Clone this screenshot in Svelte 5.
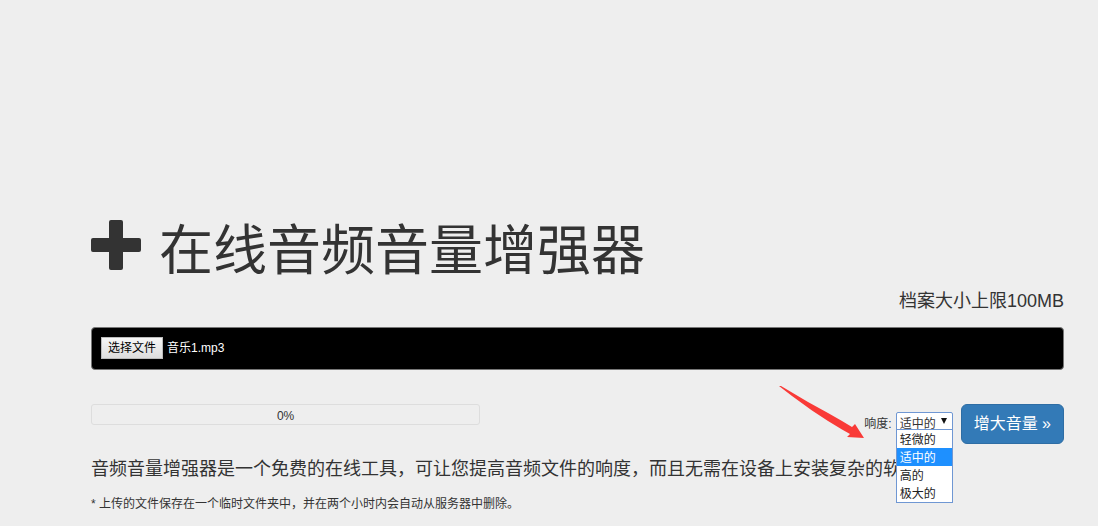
<script>
  const levels = ['轻微的', '适中的', '高的', '极大的'];
  let level = $state('适中的');
  let fileName = $state('音乐1.mp3');

  function pickFile(event) {
    const file = event.currentTarget.files[0];
    if (file) fileName = file.name;
  }
</script>

<main>
  <h1>
    <svg class="plus" viewBox="0 0 54 54" aria-hidden="true">
      <path d="M20 0h10q2 0 2 2v16h16q2 0 2 2v10q0 2-2 2h-16v16q0 2-2 2h-10q-2 0-2-2v-16h-16q-2 0-2-2v-10q0-2 2-2h16v-16q0-2 2-2z" />
    </svg>
    <span>在线音频音量增强器</span>
  </h1>

  <p class="limit">档案大小上限100MB</p>

  <div class="file">
    <input id="audio" type="file" accept="audio/*" onchange={pickFile} />
    <label for="audio">选择文件</label>
    <span>{fileName}</span>
  </div>

  <div class="controls">
    <div class="progress" role="progressbar" aria-label="0%" aria-valuenow="0" aria-valuemin="0" aria-valuemax="100">0%</div>
    <div class="actions">
      <label for="loudness">响度:</label>
      <div class="picker">
        <select id="loudness" bind:value={level}>
          {#each levels as name}
            <option value={name}>{name}</option>
          {/each}
        </select>
        <svg class="caret" viewBox="0 0 6 6" aria-hidden="true"><path d="M0 0h6l-3 6z" /></svg>
        <div class="menu">
          {#each levels as name}
            <button type="button" class:chosen={name === level} onclick={() => (level = name)}>{name}</button>
          {/each}
        </div>
        <svg class="arrow" viewBox="0 0 86 54" aria-hidden="true">
          <path d="M0 0L2 0L29 16L49 27L63 35L73 41L76 38L85 52L68 51L71 48L63 43.500L49 35L33 24.500L13 10z" />
        </svg>
      </div>
      <button type="button" class="submit">增大音量 »</button>
    </div>
  </div>

  <p class="lead">音频音量增强器是一个免费的在线工具，可让您提高音频文件的响度，而且无需在设备上安装复杂的软件。</p>
  <p class="note">* 上传的文件保存在一个临时文件夹中，并在两个小时内会自动从服务器中删除。</p>
</main>

<style>
  :global(body) {
    background: #eee;
  }

  main {
    padding: 218px 34px 0 91px;
    color: #333;
    font-family: 'Liberation Sans', 'Noto Sans CJK SC', sans-serif;
    font-size: 12px;
    line-height: 18px;
  }

  h1 {
    display: flex;
    gap: 14px;
    margin: 0;
    font-size: 54px;
    font-weight: 400;
    line-height: 66px;
  }

  .plus {
    flex: none;
    width: 54px;
    height: 54px;
    margin-top: 2px;
    fill: #333;
  }

  p {
    margin: 0;
  }

  .limit {
    margin-top: 4px;
    font-size: 18px;
    line-height: 26px;
    text-align: right;
  }

  .file {
    position: relative;
    display: flex;
    align-items: center;
    gap: 4px;
    margin-top: 13px;
    padding: 9px 9px 10px;
    border: 1px solid #777;
    border-radius: 4px;
    background: #000;
    color: #fff;
  }

  .file input {
    position: absolute;
    width: 1px;
    height: 1px;
    opacity: 0;
  }

  .file label {
    padding: 1px 6px;
    border: 1px solid #bbb;
    background: linear-gradient(#f6f6f6, #ddd);
    color: #000;
  }

  .file label,
  .file span {
    line-height: 18px;
  }

  .controls {
    display: flex;
    justify-content: space-between;
    align-items: flex-start;
    margin-top: 34px;
  }

  .progress {
    box-sizing: border-box;
    width: 40%;
    height: 21px;
    padding-top: 2px;
    border: 1px solid #ddd;
    border-radius: 3px;
    text-align: center;
  }

  .actions {
    display: flex;
    align-items: flex-start;
  }

  .actions label {
    margin-top: 11px;
  }

  .picker {
    position: relative;
    margin: 8px 8px 0 4px;
  }

  select {
    display: block;
    box-sizing: border-box;
    width: 57px;
    height: 19px;
    padding: 2px 3px 0;
    border: 1px solid #6f97d3;
    border-radius: 2px;
    outline: 0;
    appearance: none;
    background: #fff;
    color: #333;
    font: inherit;
  }

  .caret {
    position: absolute;
    top: 6px;
    right: 6px;
    width: 6px;
    height: 6px;
    fill: #111;
    pointer-events: none;
  }

  .menu {
    position: absolute;
    top: 17px;
    left: 0;
    right: 0;
    border: 1px solid #6f97d3;
    background: #fff;
  }

  .menu button {
    display: block;
    width: 100%;
    height: 18px;
    padding: 2px 3px 0;
    border: 0;
    background: none;
    color: #222;
    font: inherit;
    line-height: 16px;
    text-align: left;
  }

  .menu .chosen {
    background: #1e90ff;
    color: #fff;
  }

  .arrow {
    position: absolute;
    top: -26px;
    right: 88px;
    width: 86px;
    height: 54px;
    fill: #f93a37;
    pointer-events: none;
  }

  .submit {
    padding: 7px 12px;
    border: 1px solid #2e6da4;
    border-radius: 6px;
    background: #337ab7;
    color: #fff;
    font: inherit;
    font-size: 16px;
    line-height: 24px;
  }

  .lead {
    margin-top: 12px;
    font-size: 18px;
    line-height: 26px;
  }

  .note {
    margin-top: 13px;
  }
</style>
